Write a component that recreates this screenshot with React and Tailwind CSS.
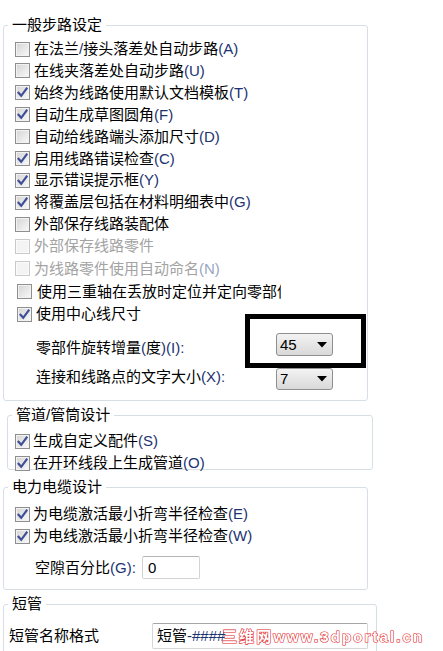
import React from 'react'

const GENERAL = [
  { t: '在法兰/接头落差处自动步路(A)', on: false, h: 'h-[22px]' },
  { t: '在线夹落差处自动步路(U)', on: false, h: 'h-[21px]' },
  { t: '始终为线路使用默认文档模板(T)', on: true, h: 'h-[23px]' },
  { t: '自动生成草图圆角(F)', on: true, h: 'h-[21px]' },
  { t: '自动给线路端头添加尺寸(D)', on: false, h: 'h-[23px]' },
  { t: '启用线路错误检查(C)', on: true, h: 'h-[21px]' },
  { t: '显示错误提示框(Y)', on: true, h: 'h-[22px]' },
  { t: '将覆盖层包括在材料明细表中(G)', on: true, h: 'h-[22px]' },
  { t: '外部保存线路装配体', on: false, h: 'h-[22px]' },
  { t: '外部保存线路零件', on: false, off: true, h: 'h-[22px]' },
  { t: '为线路零件使用自动命名(N)', on: false, off: true, h: 'h-[23px]' },
]

// ascii runs get the bluish tint seen in the screenshot
function Txt({ children, off }) {
  const parts = children.split(/([\x00-\x7f]+)/)
  return parts.map((p, i) =>
    /^[\x00-\x7f]+$/.test(p) ? (
      <span key={i} className={off ? 'text-[#98a6c4]' : 'text-[#1b3370]'}>{p}</span>
    ) : (
      <span key={i}>{p}</span>
    )
  )
}

function Box({ on, off }) {
  return (
    <span
      className={`w-[15px] h-[15px] shrink-0 flex items-center justify-center border ${
        off
          ? 'border-[#c9c9c9] bg-[#f3f3f3] shadow-[inset_0_0_0_1px_#fbfbfb]'
          : 'border-[#8e8f8f] bg-linear-to-br from-[#d4d4d4] to-[#f9f9f9] shadow-[inset_0_0_0_1px_#f2f2f2]'
      }`}
    >
      {on && (
        <svg width="11" height="11" viewBox="0 0 11 11">
          <path d="M1.5 5.8 L4.2 8.8 L9.6 1.6" fill="none" stroke="#3f4f96" strokeWidth="2.2" strokeLinecap="square" />
        </svg>
      )}
    </span>
  )
}

function Check({ t, on, off, h, cls = 'pl-[11px] gap-[4px]' }) {
  return (
    <div className={`flex items-center ${h} ${cls} ${off ? 'text-[#a3a3a3]' : 'text-black'}`}>
      <Box on={on} off={off} />
      <span className="whitespace-nowrap"><Txt off={off}>{t}</Txt></span>
    </div>
  )
}

function Drop({ value }) {
  return (
    <div className="w-[57px] h-full rounded-[3px] border border-[#8e8f8f] bg-linear-to-b from-[#f3f3f3] to-[#d9d9d9] flex items-center justify-between pl-[3px] pr-[5px] text-black">
      <span>{value}</span>
      <svg width="10" height="6" viewBox="0 0 10 6">
        <path d="M0 0 L10 0 L5 5.5 Z" fill="#000" />
      </svg>
    </div>
  )
}

function Group({ title, className, children }) {
  return (
    <fieldset className={`border border-[#d5dfe5] rounded-[3px] ${className}`}>
      <legend className="ml-[4px] px-[4px] leading-[20px] text-black">{title}</legend>
      {children}
    </fieldset>
  )
}

export default function App() {
  return (
    <div
      className="relative w-[443px] h-[651px] overflow-hidden bg-white pt-[15px] text-[15px] leading-[20px]"
      style={{ fontFamily: '"Liberation Sans", "Noto Sans CJK SC", sans-serif' }}
    >
      <Group title="一般步路设定" className="ml-[3px] w-[365px]">
        <div className="pt-[3px] pb-[10px]">
          {GENERAL.map((r, i) => (
            <Check key={i} {...r} />
          ))}
          <div className="flex items-center h-[23px] pl-[13px] gap-[5px]">
            <Box on={false} />
            <span className="w-[244px] overflow-hidden whitespace-nowrap">使用三重轴在丢放时定位并定向零部件</span>
          </div>
          <Check t="使用中心线尺寸" on h="h-[22px]" cls="pl-[13px] gap-[4px]" />
          <div className="flex items-start h-[23px] mt-[8px] pl-[32px]">
            <span className="w-[240px] mt-[5px] whitespace-nowrap"><Txt>零部件旋转增量(度)(I):</Txt></span>
            <Drop value="45" />
          </div>
          <div className="flex items-start h-[22px] mt-[12px] pl-[32px]">
            <span className="w-[240px] -mt-[1px] whitespace-nowrap"><Txt>连接和线路点的文字大小(X):</Txt></span>
            <Drop value="7" />
          </div>
        </div>
      </Group>

      <Group title="管道/管筒设计" className="mt-[4px] ml-[7px] w-[366px]">
        <div className="pt-[5px] -mb-[5px]">
          <Check t="生成自定义配件(S)" on h="h-[22px]" cls="pl-[7px] gap-[3px]" />
          <Check t="在开环线段上生成管道(O)" on h="h-[22px]" cls="pl-[7px] gap-[3px]" />
        </div>
      </Group>

      <Group title="电力电缆设计" className="mt-[7px] ml-[3px] w-[365px]">
        <div className="pt-[6px] pb-[10px]">
          <Check t="为电缆激活最小折弯半径检查(E)" on h="h-[22px]" cls="pl-[11px] gap-[3px]" />
          <Check t="为电线激活最小折弯半径检查(W)" on h="h-[22px]" cls="pl-[11px] gap-[3px]" />
          <div className="flex items-center h-[23px] mt-[9px] pl-[31px]">
            <span className="w-[107px] whitespace-nowrap"><Txt>空隙百分比(G):</Txt></span>
            <div className="w-[58px] h-full border border-[#d3d3d3] border-t-[#b5b5b5] rounded-[2px] flex items-center pl-[5px]">0</div>
          </div>
        </div>
      </Group>

      <Group title="短管" className="mt-[4px] ml-[3px] w-[374px]">
        <div className="pt-[9px] pb-[10px] pl-[5px] flex items-center">
          <span className="w-[143px] whitespace-nowrap">短管名称格式</span>
          <div className="w-[216px] h-[26px] border border-[#d6d6d6] border-t-[#a5a5a5] rounded-[2px] flex items-center pl-[4px]">
            <Txt>短管-####</Txt>
          </div>
        </div>
      </Group>

      {/* annotation frame */}
      <div className="absolute left-[245px] top-[314px] w-[121px] h-[54px] border-[5px] border-black" />

      {/* watermark */}
      <div
        className="absolute left-[222px] top-[627px] text-[15px] font-bold leading-[20px] tracking-[2.1px] text-white whitespace-nowrap [-webkit-text-stroke:1.2px_#e4262a] [paint-order:stroke_fill]"
        style={{ fontFamily: '"Liberation Sans", "Noto Sans CJK SC", sans-serif' }}
      >
        三维网www.3dportal.cn
      </div>
    </div>
  )
}
